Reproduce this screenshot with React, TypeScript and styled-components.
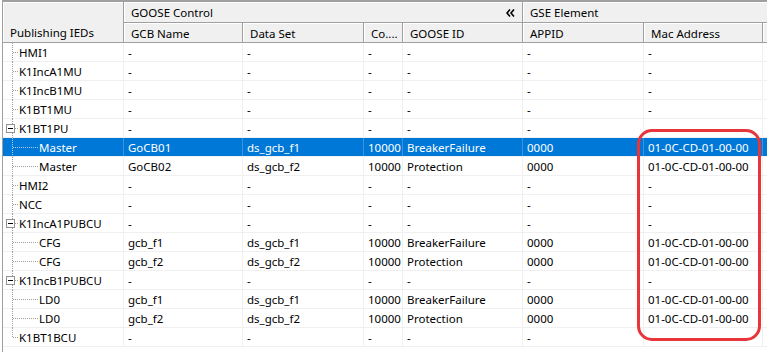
import React from 'react';
import styled, { createGlobalStyle } from 'styled-components';

const GlobalStyle = createGlobalStyle`
  html, body {
    margin: 0;
    padding: 0;
    background: #ffffff;
  }
  body {
    font-family: "Noto Sans", "DejaVu Sans", sans-serif;
    font-size: 11.5px;
    color: #000000;
  }
`;

const COLUMNS = '121px 119px 121px 39px 120px 121px 119px 1fr';

type NodeKind = 'leaf' | 'expanded' | 'last' | 'child';

interface GridRow {
  name: string;
  kind: NodeKind;
  values: string[];
  selected?: boolean;
}

const EMPTY = ['-', '-', '-', '-', '-', '-'];
const MAC = '01-0C-CD-01-00-00';

const rows: GridRow[] = [
  { name: 'HMI1', kind: 'leaf', values: EMPTY },
  { name: 'K1IncA1MU', kind: 'leaf', values: EMPTY },
  { name: 'K1IncB1MU', kind: 'leaf', values: EMPTY },
  { name: 'K1BT1MU', kind: 'leaf', values: EMPTY },
  { name: 'K1BT1PU', kind: 'expanded', values: EMPTY },
  { name: 'Master', kind: 'child', values: ['GoCB01', 'ds_gcb_f1', '10000', 'BreakerFailure', '0000', MAC], selected: true },
  { name: 'Master', kind: 'child', values: ['GoCB02', 'ds_gcb_f2', '10000', 'Protection', '0000', MAC] },
  { name: 'HMI2', kind: 'leaf', values: EMPTY },
  { name: 'NCC', kind: 'leaf', values: EMPTY },
  { name: 'K1IncA1PUBCU', kind: 'expanded', values: EMPTY },
  { name: 'CFG', kind: 'child', values: ['gcb_f1', 'ds_gcb_f1', '10000', 'BreakerFailure', '0000', MAC] },
  { name: 'CFG', kind: 'child', values: ['gcb_f2', 'ds_gcb_f2', '10000', 'Protection', '0000', MAC] },
  { name: 'K1IncB1PUBCU', kind: 'expanded', values: EMPTY },
  { name: 'LD0', kind: 'child', values: ['gcb_f1', 'ds_gcb_f1', '10000', 'BreakerFailure', '0000', MAC] },
  { name: 'LD0', kind: 'child', values: ['gcb_f2', 'ds_gcb_f2', '10000', 'Protection', '0000', MAC] },
  { name: 'K1BT1BCU', kind: 'last', values: EMPTY },
];

const Frame = styled.div`
  position: relative;
  box-sizing: border-box;
  width: 765px;
  height: 352px;
  margin-left: 2px;
  border-top: 2px solid #a0a0a0;
  border-left: 1px solid #a0a0a0;
  overflow: hidden;
  background: #ffffff;
`;

const HeaderGrid = styled.div`
  display: grid;
  grid-template-columns: ${COLUMNS};
  grid-template-rows: 21px 20px;
`;

const HeaderCell = styled.div<{ $area: string; $bottom?: boolean }>`
  grid-area: ${p => p.$area};
  display: flex;
  align-items: ${p => (p.$bottom ? 'flex-end' : 'center')};
  justify-content: space-between;
  padding: ${p => (p.$bottom ? '0 6px 2px 7px' : '1px 6px 0 7px')};
  background: #f0f0f0;
  border-right: 1px solid #a0a0a0;
  border-bottom: 1px solid #a0a0a0;
  box-shadow: inset 1px 1px 0 #ffffff;
  white-space: nowrap;
  overflow: hidden;
`;

const Collapse = styled.svg`
  flex: none;
  margin-right: 1px;
`;

const Row = styled.div<{ $selected?: boolean }>`
  display: grid;
  grid-template-columns: ${COLUMNS};
  height: 19px;
  box-sizing: border-box;
  border-bottom: 1px solid #f0f0f0;
  background: ${p => (p.$selected ? '#0078d7' : '#ffffff')};
  color: ${p => (p.$selected ? '#ffffff' : '#000000')};
`;

const Cell = styled.div<{ $selected?: boolean }>`
  display: flex;
  align-items: center;
  padding-left: 4px;
  padding-top: 1px;
  border-right: 1px solid ${p => (p.$selected ? '#3d93de' : '#f0f0f0')};
  white-space: nowrap;
  overflow: hidden;
`;

const TreeCell = styled(Cell)`
  padding-left: 0;
  padding-top: 0;
  align-items: stretch;
  overflow: visible;
`;

const Label = styled.span`
  align-self: center;
  padding-top: 1px;
`;

const Gutter = styled.svg`
  flex: none;
  overflow: visible;
`;

const Highlight = styled.div`
  position: absolute;
  left: 634px;
  top: 127px;
  width: 124px;
  height: 212px;
  box-sizing: border-box;
  border: 3px solid #e8353b;
  border-radius: 15px;
  pointer-events: none;
`;

function Connector({ kind, selected }: { kind: NodeKind; selected?: boolean }) {
  const dot = selected ? '#a8d0f5' : '#a0a0a0';
  const width = kind === 'child' ? 36 : 16;
  return (
    <Gutter width={width} height={18} shapeRendering="crispEdges">
      <line x1={9.5} y1={0} x2={9.5} y2={kind === 'last' ? 10 : 19} stroke={dot} strokeDasharray="1 1" />
      <line x1={10} y1={9.5} x2={kind === 'child' ? 35 : 15} y2={9.5} stroke={dot} strokeDasharray="1 1" />
      {kind === 'expanded' && (
        <>
          <rect x={3.5} y={5.5} width={8} height={8} fill="#ffffff" stroke="#919191" />
          <line x1={5} y1={9.5} x2={10} y2={9.5} stroke="#000000" />
        </>
      )}
    </Gutter>
  );
}

export default function App() {
  return (
    <>
      <GlobalStyle />
      <Frame>
        <HeaderGrid>
          <HeaderCell $area="1 / 1 / 3 / 2" $bottom>Publishing IEDs</HeaderCell>
          <HeaderCell $area="1 / 2 / 2 / 6">
            <span>GOOSE Control</span>
            <Collapse width={9} height={8} viewBox="0 0 9 8">
              <polyline points="4,0.5 1,4 4,7.5" fill="none" stroke="#000" strokeWidth={1.6} />
              <polyline points="8,0.5 5,4 8,7.5" fill="none" stroke="#000" strokeWidth={1.6} />
            </Collapse>
          </HeaderCell>
          <HeaderCell $area="1 / 6 / 2 / 9">GSE Element</HeaderCell>
          <HeaderCell $area="2 / 2 / 3 / 3">GCB Name</HeaderCell>
          <HeaderCell $area="2 / 3 / 3 / 4">Data Set</HeaderCell>
          <HeaderCell $area="2 / 4 / 3 / 5">Co....</HeaderCell>
          <HeaderCell $area="2 / 5 / 3 / 6">GOOSE ID</HeaderCell>
          <HeaderCell $area="2 / 6 / 3 / 7">APPID</HeaderCell>
          <HeaderCell $area="2 / 7 / 3 / 8">Mac Address</HeaderCell>
          <HeaderCell $area="2 / 8 / 3 / 9" />
        </HeaderGrid>
        {rows.map((row, i) => (
          <Row key={i} $selected={row.selected}>
            <TreeCell $selected={row.selected}>
              <Connector kind={row.kind} selected={row.selected} />
              <Label>{row.name}</Label>
            </TreeCell>
            {row.values.map((v, j) => (
              <Cell key={j} $selected={row.selected}>{v}</Cell>
            ))}
            <Cell $selected={row.selected} />
          </Row>
        ))}
        <Highlight />
      </Frame>
    </>
  );
}
